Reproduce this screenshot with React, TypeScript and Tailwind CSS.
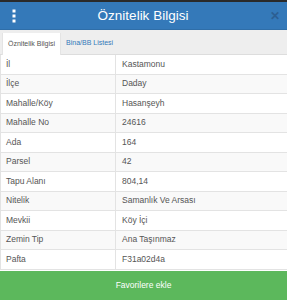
import React from "react";

const rows: [string, string][] = [
  ["İl", "Kastamonu"],
  ["İlçe", "Daday"],
  ["Mahalle/Köy", "Hasanşeyh"],
  ["Mahalle No", "24616"],
  ["Ada", "164"],
  ["Parsel", "42"],
  ["Tapu Alanı", "804,14"],
  ["Nitelik", "Samanlık Ve Arsası"],
  ["Mevkii", "Köy İçi"],
  ["Zemin Tip", "Ana Taşınmaz"],
  ["Pafta", "F31a02d4a"],
];

export default function App() {
  return (
    <div
      className="w-[287px] h-[300px] flex flex-col bg-white overflow-hidden"
      style={{ fontFamily: '"Liberation Sans", Arial, sans-serif' }}
    >
      <div className="h-[2px] bg-[#2a2a2a]" />
      <div className="h-[28px] bg-[#3479b9] flex items-center justify-between pl-[12px] pr-[7px] border-b border-[#2f6ea8]">
        <svg width="4" height="14" viewBox="0 0 4 14">
          <rect x="0.5" y="0.5" width="3" height="3" fill="#fff" />
          <rect x="0.5" y="5.5" width="3" height="3" fill="#fff" />
          <rect x="0.5" y="10.5" width="3" height="3" fill="#fff" />
        </svg>
        <span className="text-white text-[13.5px] leading-none">Öznitelik Bilgisi</span>
        <span className="text-[#2c5f93] text-[12px] font-bold leading-none">✕</span>
      </div>
      <div className="h-[25px] bg-[#eeeeee] flex items-end pl-[2px] border-b border-[#dddddd]">
        <div className="h-[22px] bg-white px-[5px] flex items-center text-[7px] text-[#555] border-l border-r border-[#e4e4e4] -mb-px">
          Öznitelik Bilgisi
        </div>
        <div className="h-[22px] px-[5px] flex items-center text-[7px] text-[#3479b9]">
          Bina/BB Listesi
        </div>
      </div>
      <div className="flex flex-col flex-1">
        {rows.map(([k, v], i) => (
          <div
            key={k}
            className={`flex h-[19.5px] border-b border-[#e3e3e3] text-[8.5px] text-[#555] ${
              i % 2 === 1 ? "bg-[#f9f9f9]" : "bg-white"
            }`}
          >
            <div className="w-[116px] pl-[5px] flex items-center border-r border-[#e3e3e3] border-l">{k}</div>
            <div className="flex-1 pl-[6px] flex items-center">{v}</div>
          </div>
        ))}
      </div>
      <div className="h-[29px] bg-[#5cb85c] flex items-center justify-center text-white text-[8.5px]">
        Favorilere ekle
      </div>
    </div>
  );
}
